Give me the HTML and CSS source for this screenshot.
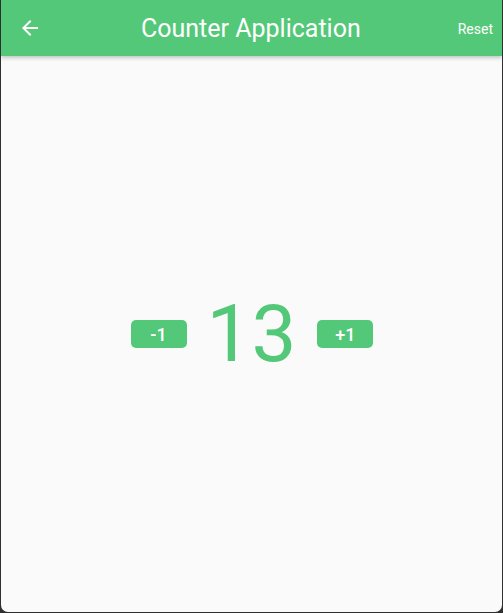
FILE: index.html
```html
<!DOCTYPE html>
<html>
<head>
<meta charset="utf-8">
<link rel="stylesheet" href="styles.css">
</head>
<body>
<div class="window">
  <header class="appbar">
    <button class="back" aria-label="Back">
      <svg viewBox="0 0 24 24" width="24" height="24"><path d="M20 11H7.83l5.59-5.59L12 4l-8 8 8 8 1.41-1.41L7.83 13H20v-2z" fill="#fff"/></svg>
    </button>
    <h1 class="title">Counter Application</h1>
    <button class="reset">Reset</button>
  </header>
  <main class="content">
    <div class="counter">
      <button class="step">-1</button>
      <span class="value">13</span>
      <button class="step">+1</button>
    </div>
  </main>
</div>
</body>
</html>
```
FILE: styles.css
```css
html, body {
  margin: 0;
  padding: 0;
  background: #2f2f2f;
  font-family: Roboto, "Liberation Sans", sans-serif;
}
.window {
  margin-left: 1px;
  width: 501px;
  height: 612px;
  background: #fafafa;
  border-radius: 0 0 7px 7px;
  overflow: hidden;
  display: flex;
  flex-direction: column;
}
.appbar {
  position: relative;
  z-index: 1;
  height: 56px;
  flex: none;
  background: #53c878;
  box-shadow: 0 2px 4px rgba(0,0,0,0.22);
  display: flex;
  align-items: center;
  color: #fff;
}
.back {
  border: 0;
  background: none;
  padding: 0;
  margin-left: 17px;
  width: 24px;
  height: 24px;
  display: flex;
}
.title {
  flex: 1;
  margin: 0;
  text-align: center;
  font-size: 25px;
  font-weight: 400;
  padding-left: 2px;
}
.reset {
  border: 0;
  background: none;
  color: #fff;
  font-family: Roboto, "Liberation Sans", sans-serif;
  font-size: 14px;
  padding: 0;
  margin-right: 9px;
  margin-top: 1px;
}
.content {
  flex: 1;
  display: flex;
  align-items: center;
  justify-content: center;
}
.counter {
  display: flex;
  align-items: center;
  gap: 20px;
  margin-left: 1px;
}
.step {
  width: 56px;
  height: 28px;
  border: 0;
  border-radius: 5px;
  background: #53c878;
  color: #fff;
  font-family: Roboto, "Liberation Sans", sans-serif;
  font-size: 18px;
  font-weight: 500;
  padding: 0;
}
.value {
  font-size: 80px;
  font-weight: 400;
  color: #53c878;
  line-height: 1;
  margin-right: 1px;
}
```
